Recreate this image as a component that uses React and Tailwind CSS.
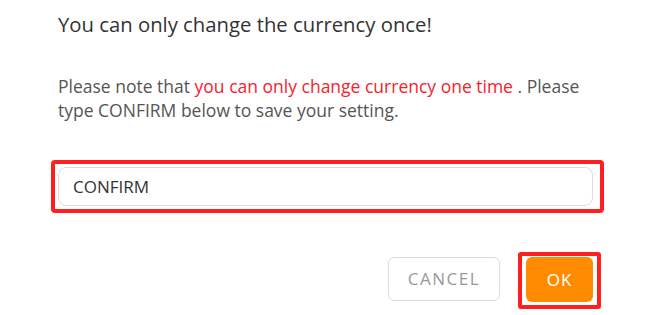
export default function App() {
    return (
        <div
            className="w-[654px] h-[315px] bg-white overflow-hidden relative"
            style={{ fontFamily: '"Open Sans", "Noto Sans", sans-serif' }}
        >
            <div className="pl-[58px] pt-[10px]">
                <h2 className="text-[20.3px] leading-[28px] text-[#333] font-normal">
                    You can only change the currency once!
                </h2>
                <p className="mt-[36px] text-[17.5px] leading-[24px] text-[#555] w-[540px]">
                    Please note that <span className="text-[#f5222d]">you can only change currency one time</span> . Please type CONFIRM below to save your setting.
                </p>

                {/* input with annotation box */}
                <div className="relative mt-[45px] w-[535px]">
                    <input
                        readOnly
                        value="CONFIRM"
                        className="block w-full h-[39px] rounded-[8px] border border-[#dcdcdc] px-[14px] text-[17px] text-[#333] outline-none"
                        style={{ fontFamily: '"Open Sans", sans-serif' }}
                    />
                    <div className="absolute -left-[7px] -right-[11px] -top-[7px] -bottom-[7px] border-4 border-[#ff1f1f] rounded-[4px] pointer-events-none" />
                </div>

                <div className="flex justify-end gap-[26px] w-[535px] mt-[51px]">
                    <button className="w-[112px] h-[44px] rounded-[6px] border border-[#dcdcdc] bg-white text-[17px] tracking-[1.5px] text-[#999]">
                        CANCEL
                    </button>
                    <div className="relative">
                        <button className="w-[67px] h-[45px] rounded-[6px] bg-[#ff8c00] text-[17px] tracking-[1px] text-white">
                            OK
                        </button>
                        <div className="absolute -left-[8px] -right-[8px] -top-[5px] -bottom-[7px] border-4 border-[#ff1f1f] rounded-[3px] pointer-events-none" />
                    </div>
                </div>
            </div>
        </div>
    );
}
